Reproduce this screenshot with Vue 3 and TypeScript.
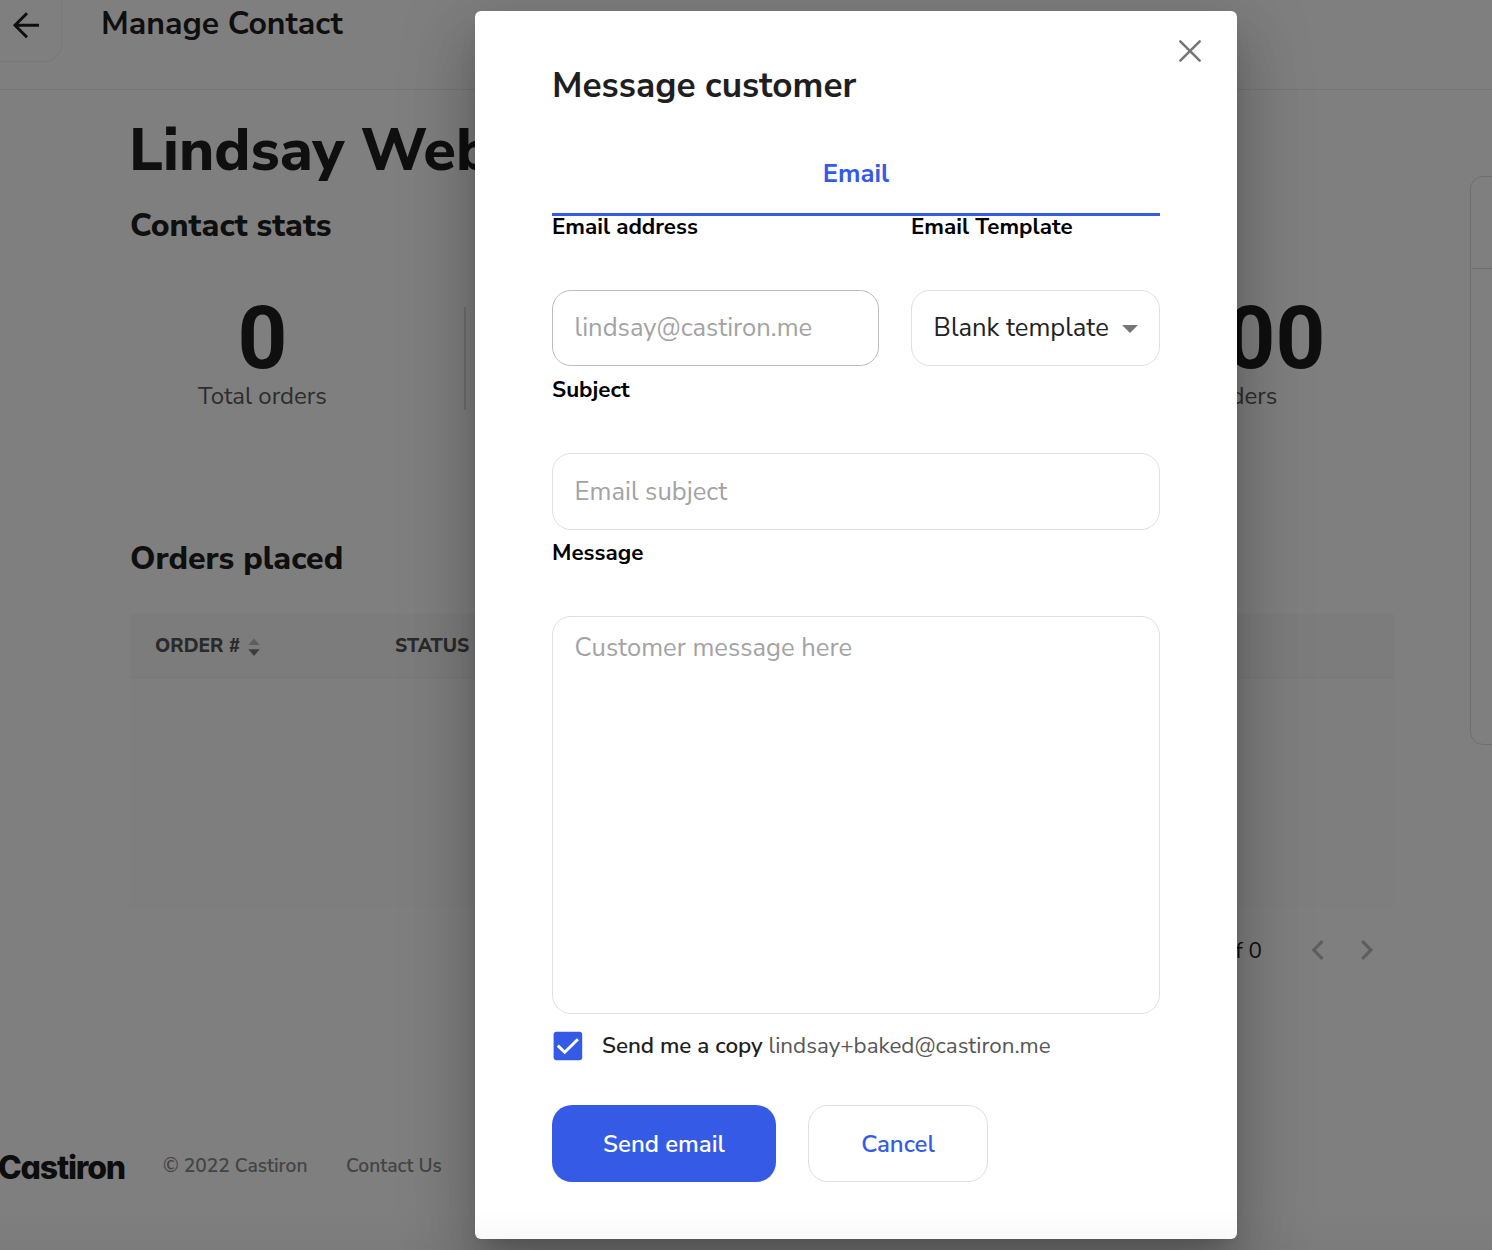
<script setup lang="ts">
import { ref } from 'vue'

const customerEmail = ref('lindsay@castiron.me')
const senderEmail = 'lindsay+baked@castiron.me'
const sendCopy = ref(true)
</script>

<template>
  <div class="app">
    <header class="topbar">
      <div class="back">
        <svg width="28" height="28" viewBox="0 0 28 28" fill="none" stroke="#1f1f1f" stroke-width="3">
          <path d="M27 14.3H3M15 2.3 3 14.3l12 12" />
        </svg>
      </div>
      <h1 class="page-title">Manage Contact</h1>
    </header>

    <main class="body">
      <section class="main">
        <h2 class="name">Lindsay Webster</h2>
        <h3 class="heading">Contact stats</h3>
        <div class="stats">
          <div class="stat">
            <div class="number">0</div>
            <div class="label">Total orders</div>
          </div>
          <div class="divider"></div>
          <div class="stat last">
            <div class="number">$0.00</div>
            <div class="label">Total orders</div>
          </div>
        </div>

        <h3 class="heading orders">Orders placed</h3>
        <div class="table">
          <div class="thead">
            <div class="th first">
              <span>ORDER #</span>
              <svg width="12" height="19" viewBox="0 0 12 19">
                <path d="M0.3 7 6 0.5 11.7 7z" fill="#bdbdbd" />
                <path d="M0.3 11.3H11.7L6 18z" fill="#7b7b80" />
              </svg>
            </div>
            <div class="th status">STATUS</div>
          </div>
          <div class="tbody"></div>
        </div>
        <div class="pager">
          <span>0-0 of 0</span>
          <svg class="prev" width="14" height="20" viewBox="0 0 14 20" fill="none" stroke="#bdbdbd" stroke-width="3.2">
            <path d="M11.5 1.2 2.8 10l8.7 8.8" />
          </svg>
          <svg class="next" width="14" height="20" viewBox="0 0 14 20" fill="none" stroke="#bdbdbd" stroke-width="3.2">
            <path d="m2.2 1.2 8.8 8.8-8.8 8.8" />
          </svg>
        </div>
      </section>

      <aside class="card">
        <div class="card-head"></div>
      </aside>
    </main>

    <footer class="footer">
      <span class="logo">Castiron</span>
      <span class="copyright">© 2022 Castiron</span>
      <span>Contact Us</span>
    </footer>

    <div class="overlay">
      <div class="modal">
        <button class="close" aria-label="Close">
          <svg width="24" height="24" viewBox="0 0 24 24" fill="none" stroke="#757575" stroke-width="2.5" stroke-linecap="round">
            <path d="m2.3 2.3 19.4 19.4M21.7 2.3 2.3 21.7" />
          </svg>
        </button>
        <h2 class="modal-title">Message customer</h2>
        <div class="tab">Email</div>

        <div class="row">
          <div class="field address">
            <div class="field-label">Email address</div>
            <div class="input strong">{{ customerEmail }}</div>
          </div>
          <div class="field template">
            <div class="field-label">Email Template</div>
            <div class="input select">
              <span>Blank template</span>
              <svg width="16" height="8" viewBox="0 0 16 8"><path d="M0 0h16L8 8z" fill="#757575" /></svg>
            </div>
          </div>
        </div>

        <div class="field subject">
          <div class="field-label">Subject</div>
          <div class="input tall">Email subject</div>
        </div>

        <div class="field message">
          <div class="field-label">Message</div>
          <div class="input area">Customer message here</div>
        </div>

        <div class="copy">
          <svg v-if="sendCopy" width="32" height="32" viewBox="0 0 32 32">
            <rect x="1.6" y="1.7" width="28.6" height="28.6" rx="3" fill="#355be6" />
            <path d="m5.8 15.6 6.9 6.7L25.9 9.2" fill="none" stroke="#fff" stroke-width="2.9" />
          </svg>
          <div class="copy-text"><span class="copy-label">Send me a copy</span>&nbsp;<span class="copy-mail">{{ senderEmail }}</span></div>
        </div>

        <div class="actions">
          <button class="btn primary">Send email</button>
          <button class="btn secondary">Cancel</button>
        </div>
      </div>
    </div>
    <div class="fade"></div>
  </div>
</template>

<style>
body { margin: 0; overflow: hidden; }
</style>

<style scoped>
* { box-sizing: border-box; }
.app {
  position: relative;
  width: 1492px;
  height: 1250px;
  overflow: hidden;
  background: #fff;
  color: #1f1f1f;
  font-family: 'Nunito Sans', Nunito, Lato, sans-serif;
}
h1, h2, h3 { margin: 0; }

.topbar {
  display: flex;
  align-items: flex-start;
  height: 90px;
  border-bottom: 1px solid #ececec;
}
.back {
  display: flex;
  justify-content: flex-end;
  width: 76px;
  height: 62px;
  margin-left: -14px;
  padding: 11px 21px 0 0;
  border: 1px solid #f0f0f0;
  border-top: 0;
  border-radius: 0 0 18px 18px;
}
.page-title {
  margin-left: 39px;
  padding-top: 4px;
  font-size: 32px;
  line-height: 40px;
  font-weight: 700;
}

.body { display: flex; height: 882px; }
.main { width: 1264px; margin-left: 130px; padding-top: 25px; flex: none; }
.name {
  margin-left: -1px;
  font-size: 59.4px;
  line-height: 72px;
  font-weight: 800;
  white-space: nowrap;
}
.heading {
  margin-top: 19px;
  font-size: 32px;
  line-height: 40px;
  font-weight: 800;
}
.heading.orders { margin-top: 129px; }
.stats { display: flex; align-items: flex-start; height: 114px; margin-top: 50px; }
.stat { display: flex; flex-direction: column; align-items: center; width: 265px; }
.stat.last { width: 220px; margin-left: 637px; }
.divider { width: 2px; height: 103px; margin: 11px 0 0 69px; background: #dedede; }
.number {
  font-family: Roboto, sans-serif;
  font-weight: 700;
  font-size: 87px;
  line-height: 84px;
}
.label { padding-top: 1px; font-size: 24px; line-height: 30px; color: #5a5a5a; }

.table { margin-top: 35px; }
.thead {
  display: flex;
  height: 64px;
  background: #f9f9f9;
  border-bottom: 1px solid #efefef;
  font-size: 19.2px;
  line-height: 62px;
  font-weight: 800;
  color: #545454;
}
.th { display: flex; align-items: center; }
.th.first { width: 265px; padding-left: 25px; }
.th svg { margin: 3px 0 0 8px; }
.tbody { height: 231px; background: #fdfdfd; }
.pager {
  display: flex;
  align-items: center;
  justify-content: flex-end;
  height: 46px;
  margin-top: 18px;
  padding-right: 20px;
  font-size: 22.4px;
  font-weight: 400;
}
.prev { margin-left: 49px; }
.next { margin-left: 35px; }

.card {
  flex: none;
  width: 400px;
  height: 569px;
  margin: 86px 0 0 76px;
  padding-left: 1px;
  border: 1px solid #dcdcdc;
  border-radius: 13px;
}
.card-head { height: 92px; border-bottom: 1px solid #dcdcdc; }

.footer {
  display: flex;
  align-items: center;
  height: 48px;
  margin-top: 170px;
  font-size: 19.2px;
  font-weight: 600;
  color: #888;
}
.logo {
  width: 165px;
  margin-left: -2px;
  padding-top: 3px;
  font-family: Inter, sans-serif;
  font-feature-settings: 'cv11';
  font-size: 32px;
  font-weight: 800;
  letter-spacing: -1.2px;
  color: #1a1a1a;
}
.copyright { width: 183px; }

.overlay {
  position: absolute;
  inset: 0;
  display: flex;
  align-items: flex-start;
  padding: 11px 0 0 475px;
  background: rgba(0, 0, 0, 0.5);
}
.modal {
  position: relative;
  width: 762px;
  height: 1228px;
  padding: 52px 77px 0;
  background: #fff;
  border-radius: 6px;
  box-shadow:
    0 17.6px 24px -11.2px rgba(0, 0, 0, 0.2),
    0 38.4px 60.8px 4.8px rgba(0, 0, 0, 0.14),
    0 14.4px 73.6px 12.8px rgba(0, 0, 0, 0.12);
}
.close {
  position: absolute;
  top: 28px;
  right: 35px;
  width: 24px;
  height: 24px;
  padding: 0;
  border: 0;
  background: none;
}
.close svg { display: block; }
.modal-title {
  font-size: 35.2px;
  line-height: 44px;
  font-weight: 700;
}
.tab {
  height: 82px;
  margin-top: 27px;
  border-bottom: 3px solid #355be6;
  font-size: 25.6px;
  line-height: 80px;
  font-weight: 700;
  text-align: center;
  color: #355be6;
}
.row { display: flex; gap: 32px; }
.address { width: 327px; }
.template { width: 249px; }
.field-label {
  padding-top: 1px;
  margin-bottom: 53px;
  font-size: 22.4px;
  line-height: 20px;
  font-weight: 700;
  color: #000;
}
.subject { margin-top: 13px; }
.message { margin-top: 12px; }
.input {
  display: flex;
  align-items: center;
  height: 76px;
  padding: 0 21px 2px 21.6px;
  border: 1px solid #dfdfdf;
  border-radius: 19px;
  font-size: 25.6px;
  color: #a3a3a3;
}
.input.strong { border-color: #bdbdbd; }
.input.select { justify-content: space-between; color: #222; }
.input.select svg { margin-top: 3px; }
.input.tall { height: 77px; padding-bottom: 0; }
.input.area { height: 398px; align-items: flex-start; padding-top: 13px; line-height: 36px; }

.copy { display: flex; align-items: center; height: 32px; margin-top: 16px; }
.copy-text { margin-left: 18px; padding-bottom: 1px; font-size: 22.4px; line-height: 28px; white-space: nowrap; }
.copy-label { font-weight: 600; }
.copy-mail { color: #575757; }

.actions { display: flex; gap: 32px; margin-top: 43px; }
.btn {
  height: 77px;
  padding: 0;
  border-radius: 20px;
  font-family: inherit;
  font-size: 24px;
  font-weight: 600;
}
.primary { width: 224px; border: 0; background: #355be6; color: #fff; }
.secondary { width: 180px; border: 1px solid #dfdfdf; background: #fff; color: #355be6; }

/* faint darkening along the bottom edge of the window */
.fade {
  position: absolute;
  left: 0;
  right: 0;
  bottom: 0;
  height: 40px;
  background: linear-gradient(rgba(0, 0, 0, 0), rgba(0, 0, 0, 0.035));
}
</style>
